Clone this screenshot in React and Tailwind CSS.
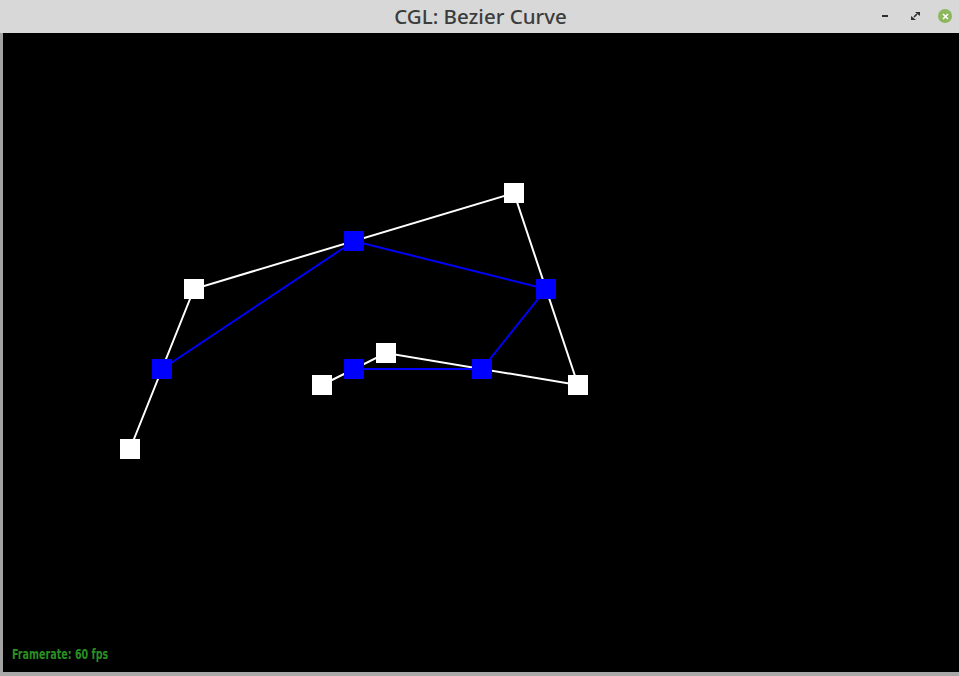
import React from 'react';

const controlPoints = [
  [130, 449],
  [194, 289],
  [514, 193],
  [578, 385],
  [386, 353],
  [322, 385],
];

// first de Casteljau level at t = 0.5
const midPoints = controlPoints.slice(1).map((p, i) => [
  (p[0] + controlPoints[i][0]) / 2,
  (p[1] + controlPoints[i][1]) / 2,
]);

const toPath = (pts) => pts.map((p) => p.join(',')).join(' ');

// canvas origin is at (3, 33) in window coordinates
const OX = 3;
const OY = 33;

const Square = ({ x, y, fill }) => (
  <rect x={x - OX - 10} y={y - OY - 10} width="20" height="20" fill={fill} />
);

export default function App() {
  const shift = (pts) => pts.map(([x, y]) => [x - OX, y - OY]);

  return (
    <div className="w-[959px] h-[676px] flex flex-col bg-[#9a9a9a] overflow-hidden">
      <div className="h-[33px] shrink-0 bg-[#d8d8d8] flex items-center relative">
        <div className="flex-1 text-center text-[20.5px] text-[#3c3c3c] font-medium pl-[2px]" style={{ fontFamily: '"Noto Sans", "Open Sans", sans-serif' }}>
          CGL: Bezier Curve
        </div>
        <div className="absolute right-[7px] top-[9px] flex items-center">
          <div className="w-[6px] h-[2px] bg-[#2e2e2e] mr-[23px]" />
          <svg width="9" height="8" viewBox="0 0 9 8" className="mr-[18px]">
            <path d="M4 0 L9 0 L9 4 Z" fill="#2e2e2e" />
            <path d="M0 4 L0 8 L5 8 Z" fill="#2e2e2e" />
            <path d="M3 5 L6 2" stroke="#2e2e2e" strokeWidth="1.6" />
          </svg>
          <div className="w-[14px] h-[14px] rounded-full bg-[#8db75c] flex items-center justify-center">
            <svg width="7" height="7" viewBox="0 0 7 7">
              <path d="M1 1 L6 6 M6 1 L1 6" stroke="#fff" strokeWidth="1.6" />
            </svg>
          </div>
        </div>
      </div>
      <div className="flex-1 flex min-h-0">
        <div className="w-[3px] shrink-0 bg-[#a3a3a3]" />
        <div className="flex-1 bg-black relative">
          <svg width="956" height="639" className="block">
            <polyline points={toPath(shift(controlPoints))} fill="none" stroke="#ffffff" strokeWidth="2" />
            <polyline points={toPath(shift(midPoints))} fill="none" stroke="#0000ff" strokeWidth="2" />
            {controlPoints.map(([x, y], i) => (
              <Square key={'c' + i} x={x} y={y} fill="#ffffff" />
            ))}
            {midPoints.map(([x, y], i) => (
              <Square key={'m' + i} x={x} y={y} fill="#0000ff" />
            ))}
          </svg>
          <div className="absolute left-[9px] bottom-[11px] text-[14px] font-bold text-[#2a8f22] leading-none scale-x-[0.76] origin-left" style={{ fontFamily: '"DejaVu Sans Condensed", "DejaVu Sans", sans-serif' }}>
            Framerate: 60 fps
          </div>
        </div>
      </div>
      <div className="h-[4px] shrink-0 bg-[#a8a8a8]" />
    </div>
  );
}
